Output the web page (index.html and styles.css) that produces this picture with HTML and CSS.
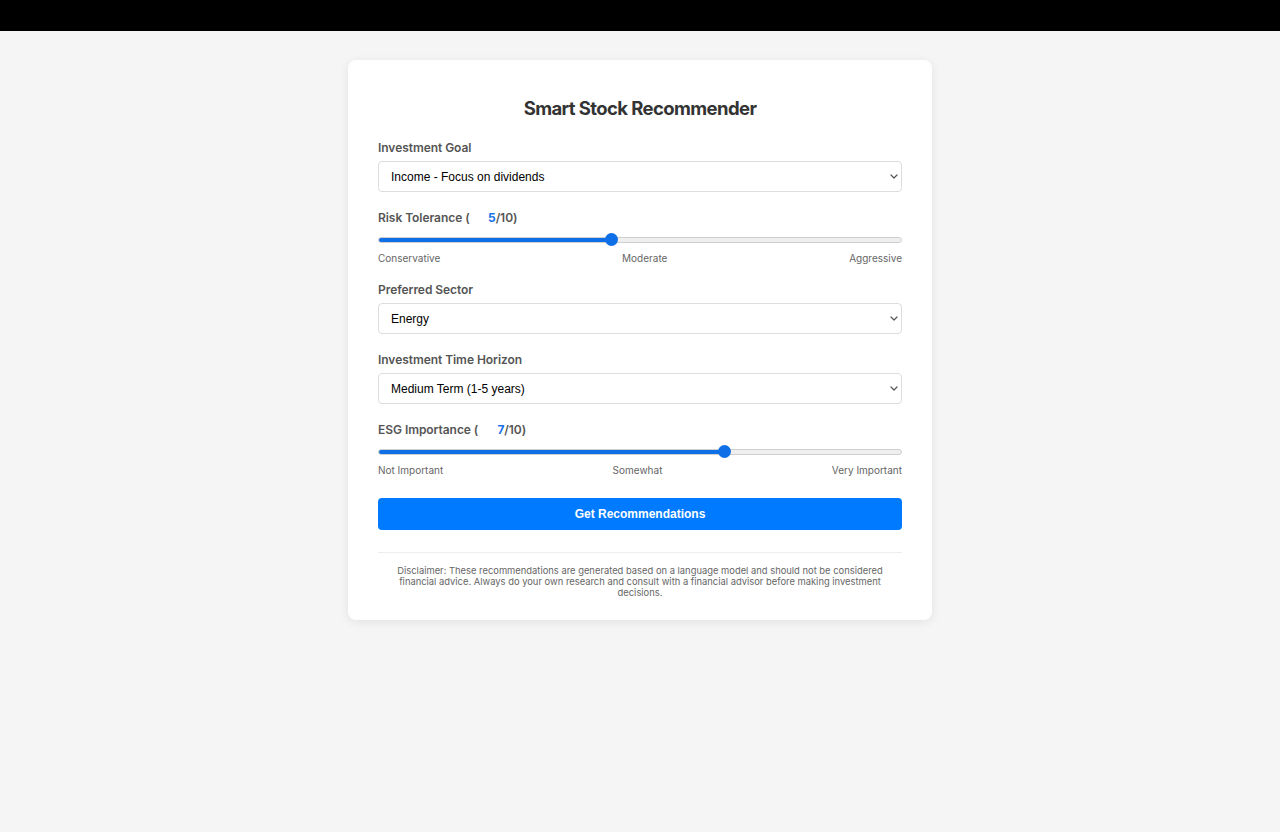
FILE: index.html
```html
<!DOCTYPE html>
<html lang="en">
<head>
<meta charset="utf-8">
<title>Smart Stock Recommender</title>
<link rel="stylesheet" href="styles.css">
</head>
<body>
<div class="topbar"></div>
<main class="page">
  <div class="card">
    <h1 class="title">Smart Stock Recommender</h1>

    <div class="group">
      <label class="label">Investment Goal</label>
      <div class="select-wrap">
        <select class="select">
          <option>Income - Focus on dividends</option>
        </select>
        <svg class="chevron" width="8" height="5" viewBox="0 0 8 5"><path d="M1 1 L4 4 L7 1" fill="none" stroke="#555" stroke-width="1.2" stroke-linecap="round" stroke-linejoin="round"/></svg>
      </div>
    </div>

    <div class="group group-slider">
      <label class="label">Risk Tolerance (<span class="value">5</span>/10)</label>
      <input class="range" type="range" min="1" max="10" value="5" style="--fill:44.4%">
      <div class="scale"><span>Conservative</span><span>Moderate</span><span>Aggressive</span></div>
    </div>

    <div class="group">
      <label class="label">Preferred Sector</label>
      <div class="select-wrap">
        <select class="select">
          <option>Energy</option>
        </select>
        <svg class="chevron" width="8" height="5" viewBox="0 0 8 5"><path d="M1 1 L4 4 L7 1" fill="none" stroke="#555" stroke-width="1.2" stroke-linecap="round" stroke-linejoin="round"/></svg>
      </div>
    </div>

    <div class="group">
      <label class="label">Investment Time Horizon</label>
      <div class="select-wrap">
        <select class="select">
          <option>Medium Term (1-5 years)</option>
        </select>
        <svg class="chevron" width="8" height="5" viewBox="0 0 8 5"><path d="M1 1 L4 4 L7 1" fill="none" stroke="#555" stroke-width="1.2" stroke-linecap="round" stroke-linejoin="round"/></svg>
      </div>
    </div>

    <div class="group group-last">
      <label class="label">ESG Importance (<span class="value">7</span>/10)</label>
      <input class="range" type="range" min="1" max="10" value="7" style="--fill:66.7%">
      <div class="scale"><span>Not Important</span><span>Somewhat</span><span>Very Important</span></div>
    </div>

    <button class="btn" type="button">Get Recommendations</button>

    <p class="disclaimer">Disclaimer: These recommendations are generated based on a language model and should not be considered<br>financial advice. Always do your own research and consult with a financial advisor before making investment<br>decisions.</p>
  </div>
</main>
</body>
</html>
```

FILE: styles.css
```css
* { box-sizing: border-box; }

html, body {
  margin: 0;
  padding: 0;
}

body {
  background: #f4f5f4;
  font-family: Inter, "Noto Sans", "Liberation Sans", sans-serif;
  color: #333;
  min-height: 832px;
}

.topbar {
  height: 31px;
  background: #000;
}

.page {
  display: flex;
  justify-content: center;
  padding-top: 29px;
}

.card {
  width: 584px;
  background: #fff;
  border-radius: 8px;
  box-shadow: 0 2px 10px rgba(0, 0, 0, 0.08);
  padding: 30px 30px 22px;
  display: flex;
  flex-direction: column;
}

.title {
  margin: 6px 0 20px;
  font-size: 18.5px;
  line-height: 24px;
  font-weight: 700;
  text-align: center;
  color: #333;
  letter-spacing: -0.6px;
}

.group {
  display: flex;
  flex-direction: column;
  margin-bottom: 18px;
}

.group-slider {
  margin-bottom: 17px;
}

.group-last {
  margin-bottom: 21px;
}

.label {
  font-size: 12px;
  line-height: 16px;
  font-weight: 600;
  color: #555;
  margin-bottom: 5px;
  letter-spacing: -0.05px;
}

.value {
  display: inline-block;
  min-width: 26px;
  text-align: right;
  color: #1a73e8;
  font-weight: 700;
}

.select-wrap {
  position: relative;
}

.select {
  appearance: none;
  -webkit-appearance: none;
  width: 100%;
  height: 31px;
  border: 1px solid #ddd;
  border-radius: 4px;
  background: #fff;
  padding: 0 12px;
  font-family: "Liberation Sans", Arial, sans-serif;
  font-size: 12px;
  color: #000;
}

.chevron {
  position: absolute;
  right: 4px;
  top: 13px;
  pointer-events: none;
}

.range {
  -webkit-appearance: none;
  appearance: none;
  width: 100%;
  height: 17px;
  margin: 0;
  background: transparent;
}

.range::-webkit-slider-runnable-track {
  height: 6px;
  border-radius: 3px;
  border: 1px solid #cfcfcf;
  background: linear-gradient(to right, #0f6fe6 0, #0f6fe6 var(--fill), #efefef var(--fill), #efefef 100%);
}

.range::-webkit-slider-thumb {
  -webkit-appearance: none;
  appearance: none;
  width: 13px;
  height: 13px;
  border-radius: 50%;
  background: #0f6fe6;
  border: none;
  margin-top: -4.5px;
}

.scale {
  display: flex;
  justify-content: space-between;
  margin-top: 3px;
  font-size: 10px;
  line-height: 14px;
  color: #666;
}

.btn {
  height: 32px;
  border: none;
  border-radius: 4px;
  background: #007bff;
  color: #fff;
  font-family: "Liberation Sans", Arial, sans-serif;
  font-weight: 700;
  font-size: 12px;
  cursor: pointer;
  margin-bottom: 22px;
}

.disclaimer {
  margin: 0;
  border-top: 1px solid #eee;
  padding-top: 12px;
  text-align: center;
  font-size: 9.4px;
  line-height: 11px;
  color: #666;
}
```
